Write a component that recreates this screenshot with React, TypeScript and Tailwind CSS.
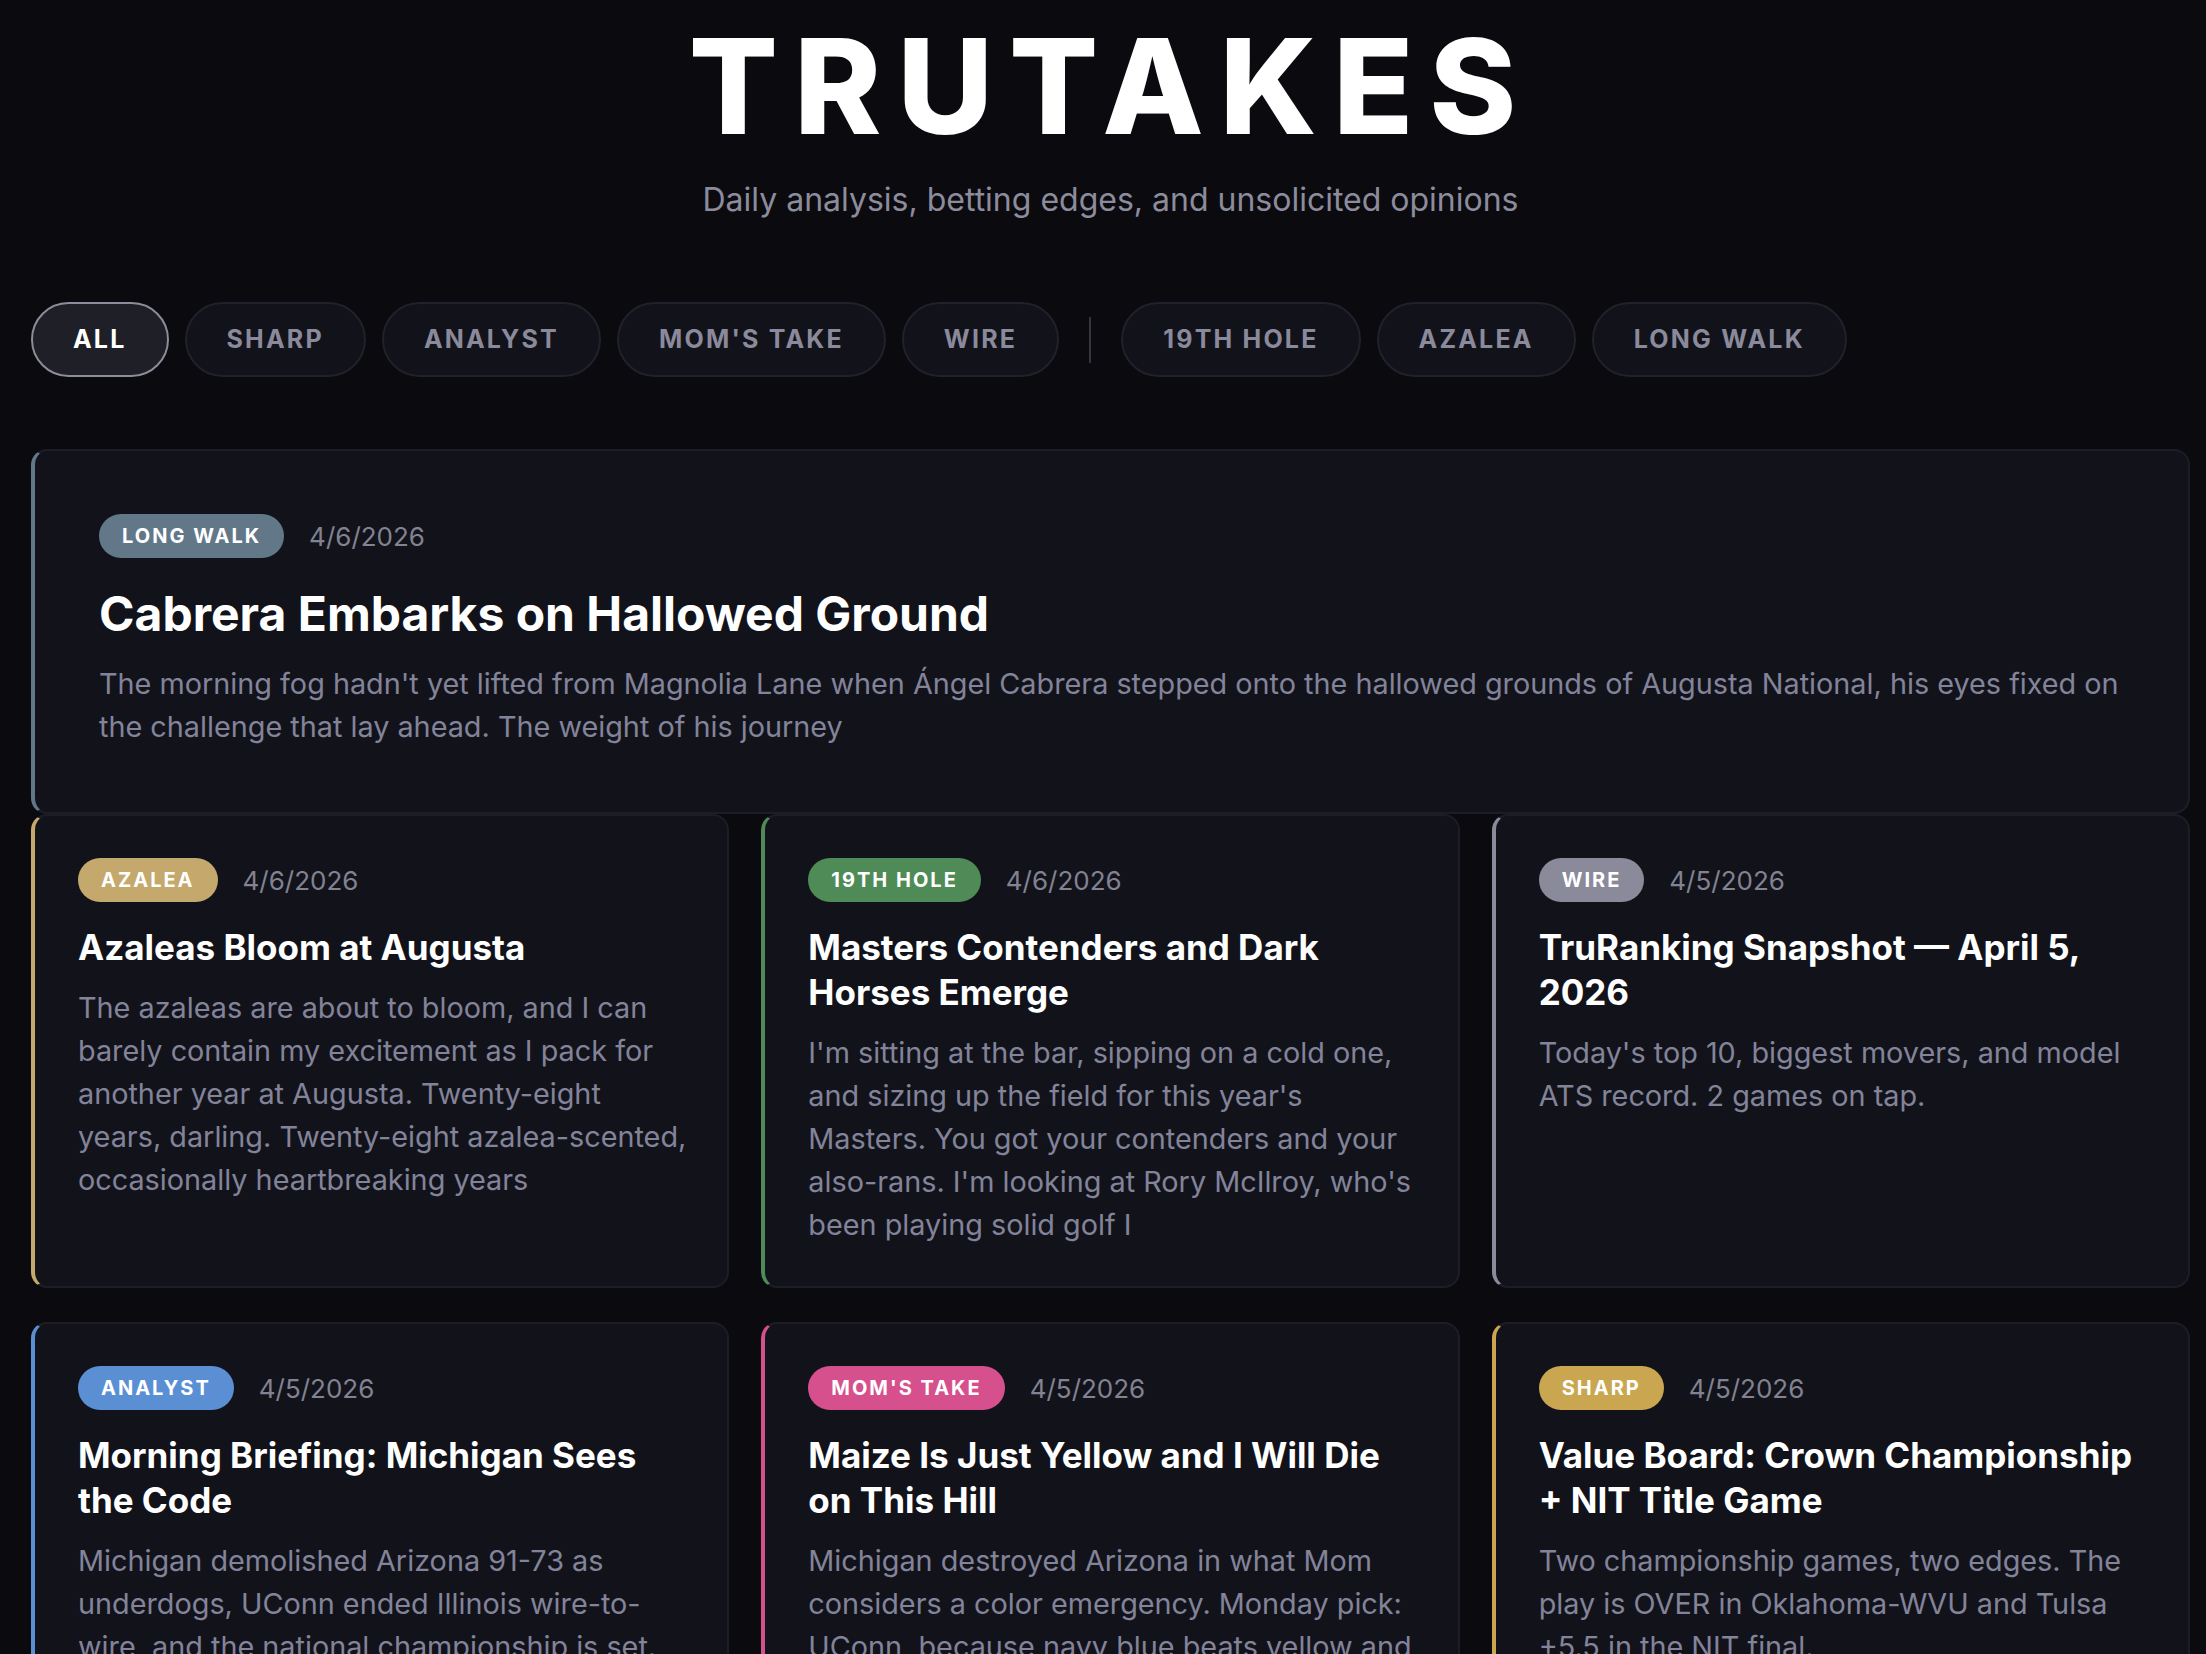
const FILTERS = ['ALL', 'SHARP', 'ANALYST', "MOM'S TAKE", 'WIRE', '|', '19TH HOLE', 'AZALEA', 'LONG WALK']

type Post = {
  tag: string
  color: string
  date: string
  title: string
  excerpt: string
}

const FEATURED: Post = {
  tag: 'LONG WALK',
  color: '#627889',
  date: '4/6/2026',
  title: 'Cabrera Embarks on Hallowed Ground',
  excerpt:
    "The morning fog hadn't yet lifted from Magnolia Lane when Ángel Cabrera stepped onto the hallowed grounds of Augusta National, his eyes fixed on the challenge that lay ahead. The weight of his journey",
}

const POSTS: Post[] = [
  {
    tag: 'AZALEA',
    color: '#c4a86c',
    date: '4/6/2026',
    title: 'Azaleas Bloom at Augusta',
    excerpt:
      'The azaleas are about to bloom, and I can barely contain my excitement as I pack for another year at Augusta. Twenty-eight years, darling. Twenty-eight azalea-scented, occasionally heartbreaking years',
  },
  {
    tag: '19TH HOLE',
    color: '#4f8b57',
    date: '4/6/2026',
    title: 'Masters Contenders and Dark Horses Emerge',
    excerpt:
      "I'm sitting at the bar, sipping on a cold one, and sizing up the field for this year's Masters. You got your contenders and your also-rans. I'm looking at Rory McIlroy, who's been playing solid golf I",
  },
  {
    tag: 'WIRE',
    color: '#8a8a9b',
    date: '4/5/2026',
    title: 'TruRanking Snapshot — April 5, 2026',
    excerpt: "Today's top 10, biggest movers, and model ATS record. 2 games on tap.",
  },
  {
    tag: 'ANALYST',
    color: '#5b8fd3',
    date: '4/5/2026',
    title: 'Morning Briefing: Michigan Sees the Code',
    excerpt:
      'Michigan demolished Arizona 91-73 as underdogs, UConn ended Illinois wire-to-wire, and the national championship is set.',
  },
  {
    tag: "MOM'S TAKE",
    color: '#d5508d',
    date: '4/5/2026',
    title: 'Maize Is Just Yellow and I Will Die on This Hill',
    excerpt:
      'Michigan destroyed Arizona in what Mom considers a color emergency. Monday pick: UConn, because navy blue beats yellow and it always will.',
  },
  {
    tag: 'SHARP',
    color: '#c9a64f',
    date: '4/5/2026',
    title: 'Value Board: Crown Championship + NIT Title Game',
    excerpt:
      'Two championship games, two edges. The play is OVER in Oklahoma-WVU and Tulsa +5.5 in the NIT final.',
  },
]

function Badge({ tag, color, date }: { tag: string; color: string; date: string }) {
  return (
    <div className="flex items-center gap-[25px]">
      <span
        className="rounded-full px-[23px] py-[10px] text-[20px] leading-[24px] font-bold tracking-[0.1em] text-white"
        style={{ backgroundColor: color }}
      >
        {tag}
      </span>
      <span className="text-[26px] text-[#828292]">{date}</span>
    </div>
  )
}

function FilterBar() {
  return (
    <div className="flex items-center gap-4">
      {FILTERS.map(f =>
        f === '|' ? (
          <div key="div" className="mx-[14px] h-[46px] w-[2px] bg-[#34353f]" />
        ) : f === 'ALL' ? (
          <button
            key={f}
            className="rounded-full border-2 border-[#8d8d99] bg-[#1e1f27] px-[40px] py-[20px] text-[25px] leading-[31px] font-bold tracking-[0.088em] text-white"
          >
            {f}
          </button>
        ) : (
          <button
            key={f}
            className="rounded-full border-2 border-[#20212a] bg-[#12131a] px-[40px] py-[20px] text-[25px] leading-[31px] font-bold tracking-[0.088em] text-[#8b8a9c]"
          >
            {f}
          </button>
        )
      )}
    </div>
  )
}

function Card({ post }: { post: Post }) {
  return (
    <div
      className="rounded-2xl border-2 border-l-4 border-[#1c1d26] bg-[#12131a] pt-[42px] pr-[36px] pb-[40px] pl-[43px]"
      style={{ borderLeftColor: post.color }}
    >
      <Badge tag={post.tag} color={post.color} date={post.date} />
      <h2 className="mt-[23px] text-[35px] leading-[45px] font-bold text-white">{post.title}</h2>
      <p className="mt-[16px] text-[28.8px] leading-[43px] text-[#83839a]">{post.excerpt}</p>
    </div>
  )
}

export default function App() {
  return (
    <div className="min-h-screen bg-[#0a0a0f] pr-[16px] pb-20 pl-[31px] font-['Inter',sans-serif]">
      <header className="pt-[20px] text-center">
        <h1 className="text-[132px] leading-none font-extrabold tracking-[0.12em] text-white">TRUTAKES</h1>
        <p className="mt-[24px] text-[32px] text-[#8c8c9c]">Daily analysis, betting edges, and unsolicited opinions</p>
      </header>

      <main>
        <div className="mt-[78px]">
          <FilterBar />
        </div>

        <div
          className="mt-[72px] rounded-2xl border-2 border-l-4 border-[#1c1d26] bg-[#12131a] px-[64px] pt-[63px] pb-[64px]"
          style={{ borderLeftColor: FEATURED.color }}
        >
          <Badge tag={FEATURED.tag} color={FEATURED.color} date={FEATURED.date} />
          <h2 className="mt-[26px] text-[48px] leading-[60px] font-bold text-white">{FEATURED.title}</h2>
          <p className="mt-[18px] text-[28.8px] leading-[43px] text-[#83839a]">{FEATURED.excerpt}</p>
        </div>

        <div className="grid grid-cols-3 gap-x-[32px] gap-y-[34px]">
          {POSTS.map(p => (
            <Card key={p.title} post={p} />
          ))}
        </div>
      </main>
    </div>
  )
}
